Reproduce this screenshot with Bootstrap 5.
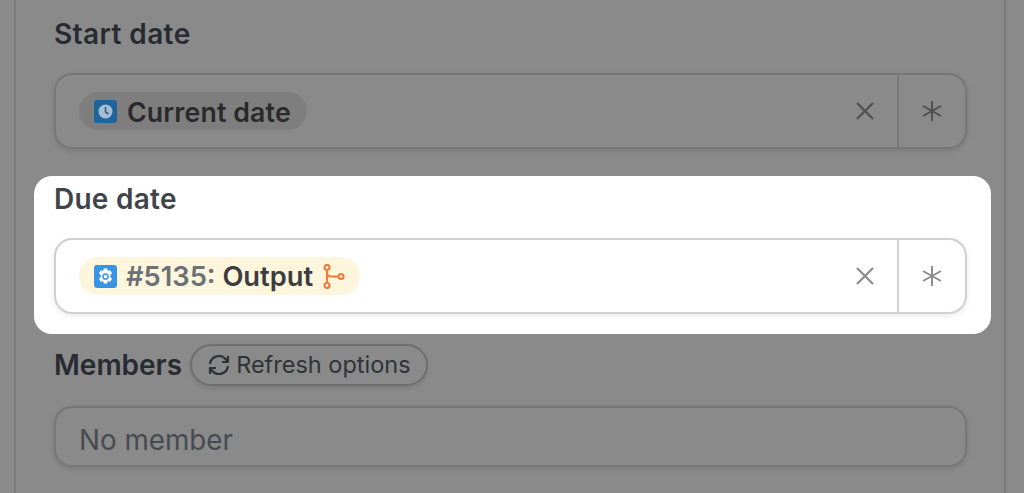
<!doctype html>
<html lang="en">
<head>
<meta charset="utf-8">
<title>Dates</title>
<link rel="stylesheet" href="https://cdn.jsdelivr.net/npm/bootstrap@5.3.0/dist/css/bootstrap.min.css">
<style>
html,body{height:493px;overflow:hidden;background:#8a8a8a;font-family:Inter,"Liberation Sans",sans-serif}
.sheet{margin:0 18px 0 14px;height:493px;border-left:2px solid #7b7b7b;border-right:2px solid #7b7b7b;padding:0 37px 0 38px}
.fieldbox{display:flex;flex-direction:column}
.fieldbox.start{height:149px;justify-content:flex-end}
.start .lbl{letter-spacing:.4px}
.hl{background:#fff;border-radius:18px;margin:27px -24px 0 -20px;padding:0 24px 20px 20px;height:158px;justify-content:flex-end}
.members{margin-top:11px}
.lbl{font-size:28px;font-weight:600;line-height:36px;color:#282c32;margin-bottom:20px;position:relative;top:-1px}
.hl .lbl{color:#3f444a;letter-spacing:.25px}
.ctl{height:76px;border:2px solid #777;border-radius:18px;display:flex;align-items:stretch;box-shadow:0 2px 5px rgba(0,0,0,.12)}
.hl .ctl{border-color:#d0d0d0;box-shadow:0 2px 6px rgba(0,0,0,.08)}
.val{flex:1;display:flex;align-items:center;padding-left:23px}
.pill{display:inline-flex;align-items:center;height:38px;border-radius:19px;padding:0 16px 0 15px;gap:10px;font-size:26.7px;font-weight:600;line-height:1;color:#2a2a2b;background:#7e7e7e}
.pilltext{position:relative;top:1px}
.start .pilltext{letter-spacing:.15px}
.pill.yel{background:#fdf6dc;color:#3b3d40;padding-right:15px;font-size:27.3px;gap:9px}
.pill .num{color:#6b7077}
.ico{width:23px;height:23px;flex:none}
.clr{width:68px;display:flex;align-items:center;justify-content:center;padding-left:4px}
.clr svg{width:20px;height:20px}
.fx{width:68px;border-left:2px solid #777;display:flex;align-items:center;justify-content:center}
.hl .fx{border-color:#d0d0d0}
.fx svg{width:20px;height:20px}
.rowhead{display:flex;align-items:center;gap:8px;margin-bottom:21px;height:40px}
.rowhead .lbl{margin:0;top:0}
.refresh{display:inline-flex;align-items:center;gap:5px;height:42px;padding:0 15px;border:2px solid #6e6e6e;border-radius:21px;font-size:23.5px;color:#2f3338;background:transparent;box-shadow:0 2px 4px rgba(0,0,0,.1)}
.refresh svg{width:24px;height:24px}
.ctl.plain{height:61px}
.ctl.plain .val{font-size:27.8px;color:#474b50;padding-left:23px;padding-top:9px}
</style>
</head>
<body>
<div class="sheet">
  <div class="fieldbox start">
    <div class="lbl">Start date</div>
    <div class="ctl">
      <div class="val"><span class="pill">
        <svg class="ico" viewBox="0 0 23 23"><rect width="23" height="23" rx="3" fill="#20649e"/><circle cx="11.5" cy="11.5" r="7" fill="#a8bccd"/><path d="M11.5 7v5l3 2" fill="none" stroke="#20649e" stroke-width="1.6"/></svg>
        <span class="pilltext">Current date</span></span></div>
      <div class="clr"><svg viewBox="0 0 20 20"><path d="M2 2l16 16M18 2L2 18" stroke="#4f4f4f" stroke-width="2.2"/></svg></div>
      <div class="fx"><svg viewBox="0 0 20 20"><path d="M10 0v20M1 5l18 10M19 5L1 15" stroke="#4f4f4f" stroke-width="1.9"/></svg></div>
    </div>
  </div>
  <div class="fieldbox hl">
    <div class="lbl">Due date</div>
    <div class="ctl">
      <div class="val"><span class="pill yel">
        <svg class="ico" viewBox="0 0 23 23"><rect width="23" height="23" rx="3" fill="#3a94e6"/><path d="M9.800 3.500h3.400l.7 2.400 2.400-.6 1.700 3-1.700 1.800v1.800l1.700 1.800-1.700 3-2.400-.6-.7 2.400H9.800l-.7-2.400-2.400.6-1.700-3 1.700-1.800v-1.800L5 8.300l1.700-3 2.400.6z" fill="#fff"/><circle cx="11.500" cy="11.500" r="2.600" fill="none" stroke="#3a94e6" stroke-width="1.500"/></svg>
        <span class="pilltext"><span class="num">#5135:</span> Output</span>
        <svg class="forkico" width="23" height="25" viewBox="0 0 23 25"><g fill="none" stroke="#ee7c3e" stroke-width="2.200"><circle cx="5" cy="3.500" r="2.500"/><circle cx="5" cy="21.500" r="2.500"/><circle cx="19" cy="12.500" r="2.500"/><path d="M5 6v13M5 8.500c0 2.500 2 4 4 4h7.500"/></g></svg>
      </span></div>
      <div class="clr"><svg viewBox="0 0 20 20"><path d="M2 2l16 16M18 2L2 18" stroke="#8b8b8b" stroke-width="2.200"/></svg></div>
      <div class="fx"><svg viewBox="0 0 20 20"><path d="M10 0v20M1 5l18 10M19 5L1 15" stroke="#8b8b8b" stroke-width="1.900"/></svg></div>
    </div>
  </div>
  <div class="members">
    <div class="rowhead">
      <div class="lbl">Members</div>
      <span class="refresh">
        <svg viewBox="0 0 24 24" fill="none" stroke="#2f3338" stroke-width="2.200" stroke-linejoin="round"><path d="M3 11a9 9 0 0 1 16-4.500L21 9M21 3v6h-6M21 13a9 9 0 0 1-16 4.500L3 15M3 21v-6h6"/></svg>
        Refresh options</span>
    </div>
    <div class="ctl plain"><div class="val">No member</div></div>
  </div>
</div>
<script src="https://cdn.jsdelivr.net/npm/bootstrap@5.3.0/dist/js/bootstrap.bundle.min.js"></script>
</body>
</html>
